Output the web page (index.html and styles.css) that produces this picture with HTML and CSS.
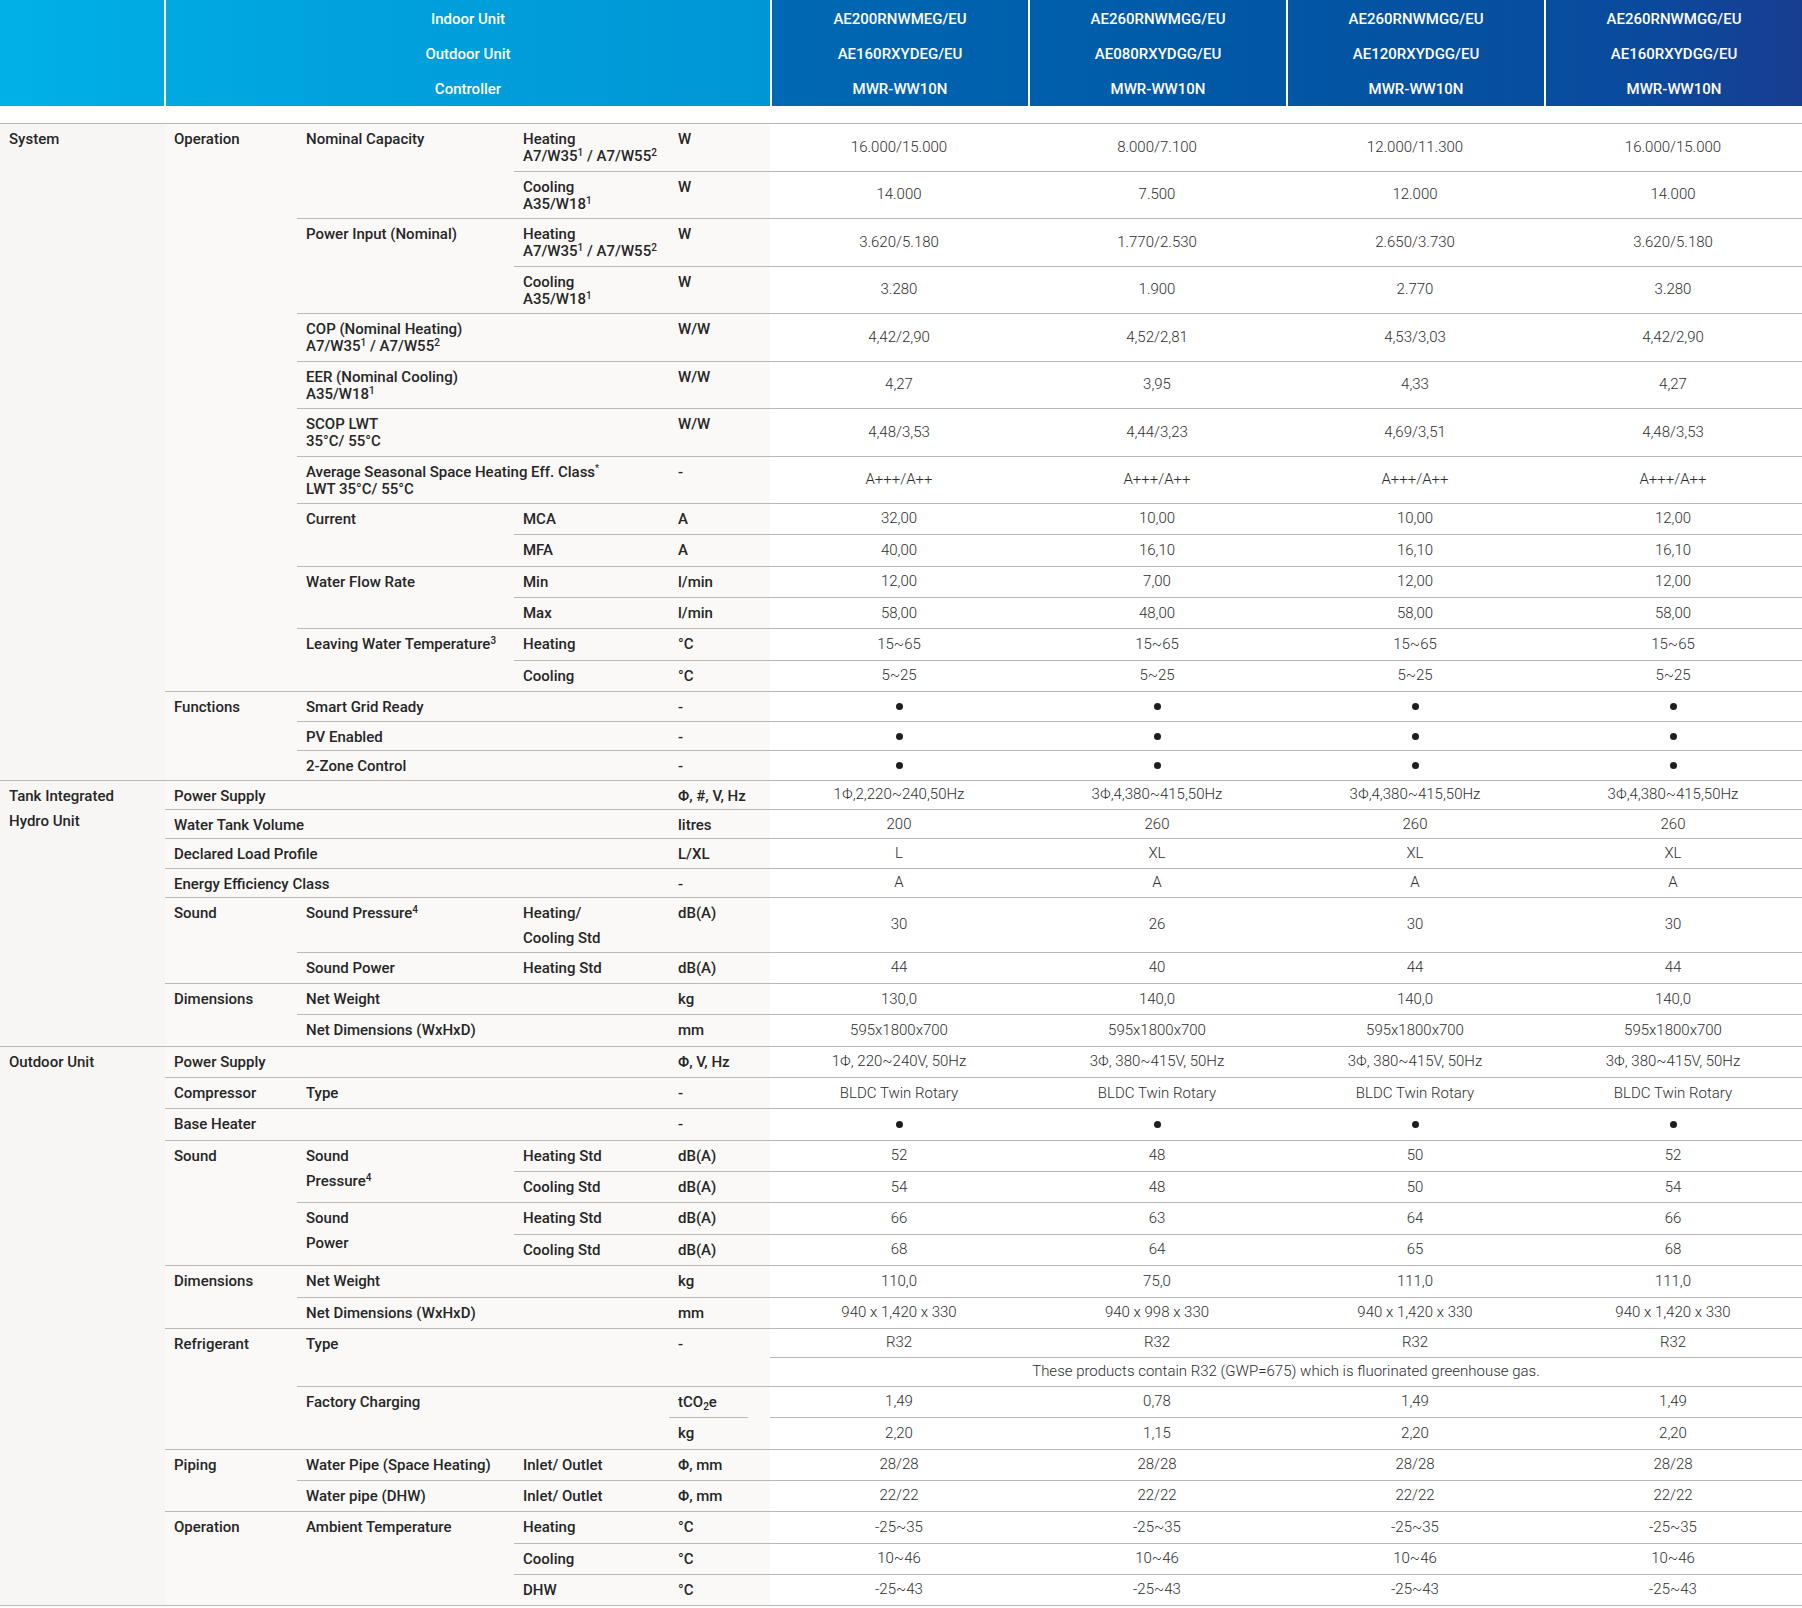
FILE: index.html
```html
<!DOCTYPE html>
<html lang="en">
<head>
<meta charset="utf-8">
<title>Specifications</title>
<link rel="stylesheet" href="styles.css">
</head>
<body>
<div class="header">
  <div class="hleft">
    <div class="hblank"></div>
    <div class="hcell hlabels"><span>Indoor Unit</span><span>Outdoor Unit</span><span>Controller</span></div>
  </div>
  <div class="hright">
    <div class="hcell"><span>AE200RNWMEG/EU</span><span>AE160RXYDEG/EU</span><span>MWR-WW10N</span></div>
    <div class="hcell"><span>AE260RNWMGG/EU</span><span>AE080RXYDGG/EU</span><span>MWR-WW10N</span></div>
    <div class="hcell"><span>AE260RNWMGG/EU</span><span>AE120RXYDGG/EU</span><span>MWR-WW10N</span></div>
    <div class="hcell"><span>AE260RNWMGG/EU</span><span>AE160RXYDGG/EU</span><span>MWR-WW10N</span></div>
  </div>
</div>

<table class="spec">
  <colgroup>
    <col class="ca"><col class="cb"><col class="cc"><col class="cd"><col class="ce">
    <col class="cv"><col class="cv"><col class="cv"><col class="cv">
  </colgroup>
  <tbody>
    <!-- System -->
    <tr class="h47">
      <td class="s" rowspan="17">System</td>
      <td class="l" rowspan="14">Operation</td>
      <td class="l" rowspan="2">Nominal Capacity</td>
      <td class="l">Heating<br>A7/W35<sup>1</sup> / A7/W55<sup>2</sup></td>
      <td class="l">W</td>
      <td class="v">16.000/15.000</td><td class="v">8.000/7.100</td><td class="v">12.000/11.300</td><td class="v">16.000/15.000</td>
    </tr>
    <tr class="h47">
      <td class="l">Cooling<br>A35/W18<sup>1</sup></td>
      <td class="l">W</td>
      <td class="v">14.000</td><td class="v">7.500</td><td class="v">12.000</td><td class="v">14.000</td>
    </tr>
    <tr class="h47">
      <td class="l" rowspan="2">Power Input (Nominal)</td>
      <td class="l">Heating<br>A7/W35<sup>1</sup> / A7/W55<sup>2</sup></td>
      <td class="l">W</td>
      <td class="v">3.620/5.180</td><td class="v">1.770/2.530</td><td class="v">2.650/3.730</td><td class="v">3.620/5.180</td>
    </tr>
    <tr class="h47">
      <td class="l">Cooling<br>A35/W18<sup>1</sup></td>
      <td class="l">W</td>
      <td class="v">3.280</td><td class="v">1.900</td><td class="v">2.770</td><td class="v">3.280</td>
    </tr>
    <tr class="h47">
      <td class="l" colspan="2">COP (Nominal Heating)<br>A7/W35<sup>1</sup> / A7/W55<sup>2</sup></td>
      <td class="l">W/W</td>
      <td class="v">4,42/2,90</td><td class="v">4,52/2,81</td><td class="v">4,53/3,03</td><td class="v">4,42/2,90</td>
    </tr>
    <tr class="h47">
      <td class="l" colspan="2">EER (Nominal Cooling)<br>A35/W18<sup>1</sup></td>
      <td class="l">W/W</td>
      <td class="v">4,27</td><td class="v">3,95</td><td class="v">4,33</td><td class="v">4,27</td>
    </tr>
    <tr class="h47">
      <td class="l" colspan="2">SCOP LWT<br>35°C/ 55°C</td>
      <td class="l">W/W</td>
      <td class="v">4,48/3,53</td><td class="v">4,44/3,23</td><td class="v">4,69/3,51</td><td class="v">4,48/3,53</td>
    </tr>
    <tr class="h47">
      <td class="l" colspan="2">Average Seasonal Space Heating Eff. Class<sup class="ast">*</sup><br>LWT 35°C/ 55°C</td>
      <td class="l">-</td>
      <td class="v">A+++/A++</td><td class="v">A+++/A++</td><td class="v">A+++/A++</td><td class="v">A+++/A++</td>
    </tr>
    <tr class="h31">
      <td class="l" rowspan="2">Current</td>
      <td class="l">MCA</td>
      <td class="l">A</td>
      <td class="v">32,00</td><td class="v">10,00</td><td class="v">10,00</td><td class="v">12,00</td>
    </tr>
    <tr class="h31">
      <td class="l">MFA</td>
      <td class="l">A</td>
      <td class="v">40,00</td><td class="v">16,10</td><td class="v">16,10</td><td class="v">16,10</td>
    </tr>
    <tr class="h31">
      <td class="l" rowspan="2">Water Flow Rate</td>
      <td class="l">Min</td>
      <td class="l">l/min</td>
      <td class="v">12,00</td><td class="v">7,00</td><td class="v">12,00</td><td class="v">12,00</td>
    </tr>
    <tr class="h31">
      <td class="l">Max</td>
      <td class="l">l/min</td>
      <td class="v">58,00</td><td class="v">48,00</td><td class="v">58,00</td><td class="v">58,00</td>
    </tr>
    <tr class="h31">
      <td class="l" rowspan="2">Leaving Water Temperature<sup>3</sup></td>
      <td class="l">Heating</td>
      <td class="l">°C</td>
      <td class="v">15~65</td><td class="v">15~65</td><td class="v">15~65</td><td class="v">15~65</td>
    </tr>
    <tr class="h31">
      <td class="l">Cooling</td>
      <td class="l">°C</td>
      <td class="v">5~25</td><td class="v">5~25</td><td class="v">5~25</td><td class="v">5~25</td>
    </tr>
    <tr class="hf">
      <td class="l" rowspan="3">Functions</td>
      <td class="l" colspan="2">Smart Grid Ready</td>
      <td class="l">-</td>
      <td class="v"><span class="dot"></span></td><td class="v"><span class="dot"></span></td><td class="v"><span class="dot"></span></td><td class="v"><span class="dot"></span></td>
    </tr>
    <tr class="hf">
      <td class="l" colspan="2">PV Enabled</td>
      <td class="l">-</td>
      <td class="v"><span class="dot"></span></td><td class="v"><span class="dot"></span></td><td class="v"><span class="dot"></span></td><td class="v"><span class="dot"></span></td>
    </tr>
    <tr class="hf">
      <td class="l" colspan="2">2-Zone Control</td>
      <td class="l">-</td>
      <td class="v"><span class="dot"></span></td><td class="v"><span class="dot"></span></td><td class="v"><span class="dot"></span></td><td class="v"><span class="dot"></span></td>
    </tr>

    <!-- Tank Integrated Hydro Unit -->
    <tr class="ht">
      <td class="s loose" rowspan="8">Tank Integrated<br>Hydro Unit</td>
      <td class="l" colspan="3">Power Supply</td>
      <td class="l">Φ, #, V, Hz</td>
      <td class="v">1Φ,2,220~240,50Hz</td><td class="v">3Φ,4,380~415,50Hz</td><td class="v">3Φ,4,380~415,50Hz</td><td class="v">3Φ,4,380~415,50Hz</td>
    </tr>
    <tr class="ht">
      <td class="l" colspan="3">Water Tank Volume</td>
      <td class="l">litres</td>
      <td class="v">200</td><td class="v">260</td><td class="v">260</td><td class="v">260</td>
    </tr>
    <tr class="ht">
      <td class="l" colspan="3">Declared Load Profile</td>
      <td class="l">L/XL</td>
      <td class="v">L</td><td class="v">XL</td><td class="v">XL</td><td class="v">XL</td>
    </tr>
    <tr class="ht">
      <td class="l" colspan="3">Energy Efficiency Class</td>
      <td class="l">-</td>
      <td class="v">A</td><td class="v">A</td><td class="v">A</td><td class="v">A</td>
    </tr>
    <tr class="h54">
      <td class="l" rowspan="2">Sound</td>
      <td class="l">Sound Pressure<sup>4</sup></td>
      <td class="l loose">Heating/<br>Cooling Std</td>
      <td class="l">dB(A)</td>
      <td class="v">30</td><td class="v">26</td><td class="v">30</td><td class="v">30</td>
    </tr>
    <tr class="h31">
      <td class="l">Sound Power</td>
      <td class="l">Heating Std</td>
      <td class="l">dB(A)</td>
      <td class="v">44</td><td class="v">40</td><td class="v">44</td><td class="v">44</td>
    </tr>
    <tr class="h31">
      <td class="l" rowspan="2">Dimensions</td>
      <td class="l" colspan="2">Net Weight</td>
      <td class="l">kg</td>
      <td class="v">130,0</td><td class="v">140,0</td><td class="v">140,0</td><td class="v">140,0</td>
    </tr>
    <tr class="h31">
      <td class="l" colspan="2">Net Dimensions (WxHxD)</td>
      <td class="l">mm</td>
      <td class="v">595x1800x700</td><td class="v">595x1800x700</td><td class="v">595x1800x700</td><td class="v">595x1800x700</td>
    </tr>

    <!-- Outdoor Unit -->
    <tr class="h31">
      <td class="s" rowspan="18">Outdoor Unit</td>
      <td class="l" colspan="3">Power Supply</td>
      <td class="l">Φ, V, Hz</td>
      <td class="v">1Φ, 220~240V, 50Hz</td><td class="v">3Φ, 380~415V, 50Hz</td><td class="v">3Φ, 380~415V, 50Hz</td><td class="v">3Φ, 380~415V, 50Hz</td>
    </tr>
    <tr class="h31">
      <td class="l">Compressor</td>
      <td class="l" colspan="2">Type</td>
      <td class="l">-</td>
      <td class="v">BLDC Twin Rotary</td><td class="v">BLDC Twin Rotary</td><td class="v">BLDC Twin Rotary</td><td class="v">BLDC Twin Rotary</td>
    </tr>
    <tr class="h31">
      <td class="l" colspan="3">Base Heater</td>
      <td class="l">-</td>
      <td class="v"><span class="dot"></span></td><td class="v"><span class="dot"></span></td><td class="v"><span class="dot"></span></td><td class="v"><span class="dot"></span></td>
    </tr>
    <tr class="h31">
      <td class="l" rowspan="4">Sound</td>
      <td class="l loose" rowspan="2">Sound<br>Pressure<sup>4</sup></td>
      <td class="l">Heating Std</td>
      <td class="l">dB(A)</td>
      <td class="v">52</td><td class="v">48</td><td class="v">50</td><td class="v">52</td>
    </tr>
    <tr class="h31">
      <td class="l">Cooling Std</td>
      <td class="l">dB(A)</td>
      <td class="v">54</td><td class="v">48</td><td class="v">50</td><td class="v">54</td>
    </tr>
    <tr class="h31">
      <td class="l loose" rowspan="2">Sound<br>Power</td>
      <td class="l">Heating Std</td>
      <td class="l">dB(A)</td>
      <td class="v">66</td><td class="v">63</td><td class="v">64</td><td class="v">66</td>
    </tr>
    <tr class="h31">
      <td class="l">Cooling Std</td>
      <td class="l">dB(A)</td>
      <td class="v">68</td><td class="v">64</td><td class="v">65</td><td class="v">68</td>
    </tr>
    <tr class="h31">
      <td class="l" rowspan="2">Dimensions</td>
      <td class="l" colspan="2">Net Weight</td>
      <td class="l">kg</td>
      <td class="v">110,0</td><td class="v">75,0</td><td class="v">111,0</td><td class="v">111,0</td>
    </tr>
    <tr class="h31">
      <td class="l" colspan="2">Net Dimensions (WxHxD)</td>
      <td class="l">mm</td>
      <td class="v">940 x 1,420 x 330</td><td class="v">940 x 998 x 330</td><td class="v">940 x 1,420 x 330</td><td class="v">940 x 1,420 x 330</td>
    </tr>
    <tr class="hn">
      <td class="l" rowspan="4">Refrigerant</td>
      <td class="l" colspan="2" rowspan="2">Type</td>
      <td class="l" rowspan="2">-</td>
      <td class="v">R32</td><td class="v">R32</td><td class="v">R32</td><td class="v">R32</td>
    </tr>
    <tr class="hn">
      <td class="v" colspan="4">These products contain R32 (GWP=675) which is fluorinated greenhouse gas.</td>
    </tr>
    <tr class="h31">
      <td class="l" colspan="2" rowspan="2">Factory Charging</td>
      <td class="l">tCO<sub>2</sub>e</td>
      <td class="v">1,49</td><td class="v">0,78</td><td class="v">1,49</td><td class="v">1,49</td>
    </tr>
    <tr class="h31">
      <td class="l short">kg</td>
      <td class="v">2,20</td><td class="v">1,15</td><td class="v">2,20</td><td class="v">2,20</td>
    </tr>
    <tr class="h31">
      <td class="l" rowspan="2">Piping</td>
      <td class="l">Water Pipe (Space Heating)</td>
      <td class="l">Inlet/ Outlet</td>
      <td class="l">Φ, mm</td>
      <td class="v">28/28</td><td class="v">28/28</td><td class="v">28/28</td><td class="v">28/28</td>
    </tr>
    <tr class="h31">
      <td class="l">Water pipe (DHW)</td>
      <td class="l">Inlet/ Outlet</td>
      <td class="l">Φ, mm</td>
      <td class="v">22/22</td><td class="v">22/22</td><td class="v">22/22</td><td class="v">22/22</td>
    </tr>
    <tr class="h31">
      <td class="l" rowspan="3">Operation</td>
      <td class="l" rowspan="3">Ambient Temperature</td>
      <td class="l">Heating</td>
      <td class="l">°C</td>
      <td class="v">-25~35</td><td class="v">-25~35</td><td class="v">-25~35</td><td class="v">-25~35</td>
    </tr>
    <tr class="h31">
      <td class="l">Cooling</td>
      <td class="l">°C</td>
      <td class="v">10~46</td><td class="v">10~46</td><td class="v">10~46</td><td class="v">10~46</td>
    </tr>
    <tr class="h31">
      <td class="l">DHW</td>
      <td class="l">°C</td>
      <td class="v">-25~43</td><td class="v">-25~43</td><td class="v">-25~43</td><td class="v">-25~43</td>
    </tr>
  </tbody>
</table>
</body>
</html>
```

FILE: styles.css
```css
html, body {
  margin: 0;
  padding: 0;
  background: #ffffff;
}

body {
  font-family: Roboto, "Liberation Sans", Arial, sans-serif;
  font-size: 15px;
  color: #2b2b2b;
  width: 1802px;
}

/* ---------- header ---------- */
.header {
  display: flex;
  height: 106px;
  color: #ffffff;
  font-weight: 500;
  font-size: 15px;
}

.hleft {
  display: flex;
  width: 770px;
  background: linear-gradient(90deg, #00b1e7 0%, #00a3de 40%, #0096d5 100%);
}

.hblank {
  width: 164px;
  flex: none;
}

.hright {
  display: flex;
  flex: 1;
  background: linear-gradient(90deg, #0069b4 0%, #0058a6 45%, #0a4a9d 85%, #183d90 100%);
}

.hcell {
  flex: 1;
  display: flex;
  flex-direction: column;
  align-items: center;
  padding-top: 2px;
  border-left: 2px solid #ffffff;
}

.hcell span {
  height: 35px;
  line-height: 35px;
  white-space: nowrap;
}

/* ---------- table ---------- */
.spec {
  margin-top: 17px;
  width: 1802px;
  table-layout: fixed;
  border-collapse: separate;
  border-spacing: 0;
  border-bottom: 1px solid #bdb7b7;
}

.ca { width: 165px; }
.cb { width: 132px; }
.cc { width: 217px; }
.cd { width: 155px; }
.ce { width: 101px; }
.cv { width: 258px; }

.spec td {
  box-sizing: border-box;
  border-top: 1px solid #bdb7b7;
  line-height: 17.4px;
  font-size: 15px;
  white-space: nowrap;
}

.spec .s,
.spec .l {
  vertical-align: top;
  padding: 7px 6px 0 9px;
  font-weight: 500;
  color: #262626;
}

.spec .s {
  background: #f8f6f5;
}

.spec .l {
  background: #faf9f8;
}

.spec .loose {
  line-height: 25px;
  padding-top: 3px;
}

.spec .v {
  vertical-align: middle;
  text-align: center;
  padding: 0 4px;
  font-weight: 300;
  color: #2e2e2e;
  background: #ffffff;
}

.spec .short {
  border-top-color: transparent;
  background: linear-gradient(#bdb7b7, #bdb7b7) 0 0 / 79px 1px no-repeat border-box, #faf9f8;
}

.h47 { height: 47.5px; }
.h31 { height: 31.35px; }
.hf  { height: 29.6px; }
.ht  { height: 29.3px; }
.h54 { height: 54.7px; }
.hn  { height: 29px; }

sup {
  font-size: 10px;
  line-height: 0;
  vertical-align: 5px;
}

.ast {
  font-size: 9px;
  vertical-align: 6px;
}

sub {
  font-size: 10px;
  line-height: 0;
  vertical-align: -3px;
}

.dot {
  display: inline-block;
  width: 7px;
  height: 7px;
  border-radius: 50%;
  background: #1e1e1e;
  vertical-align: middle;
}
```
